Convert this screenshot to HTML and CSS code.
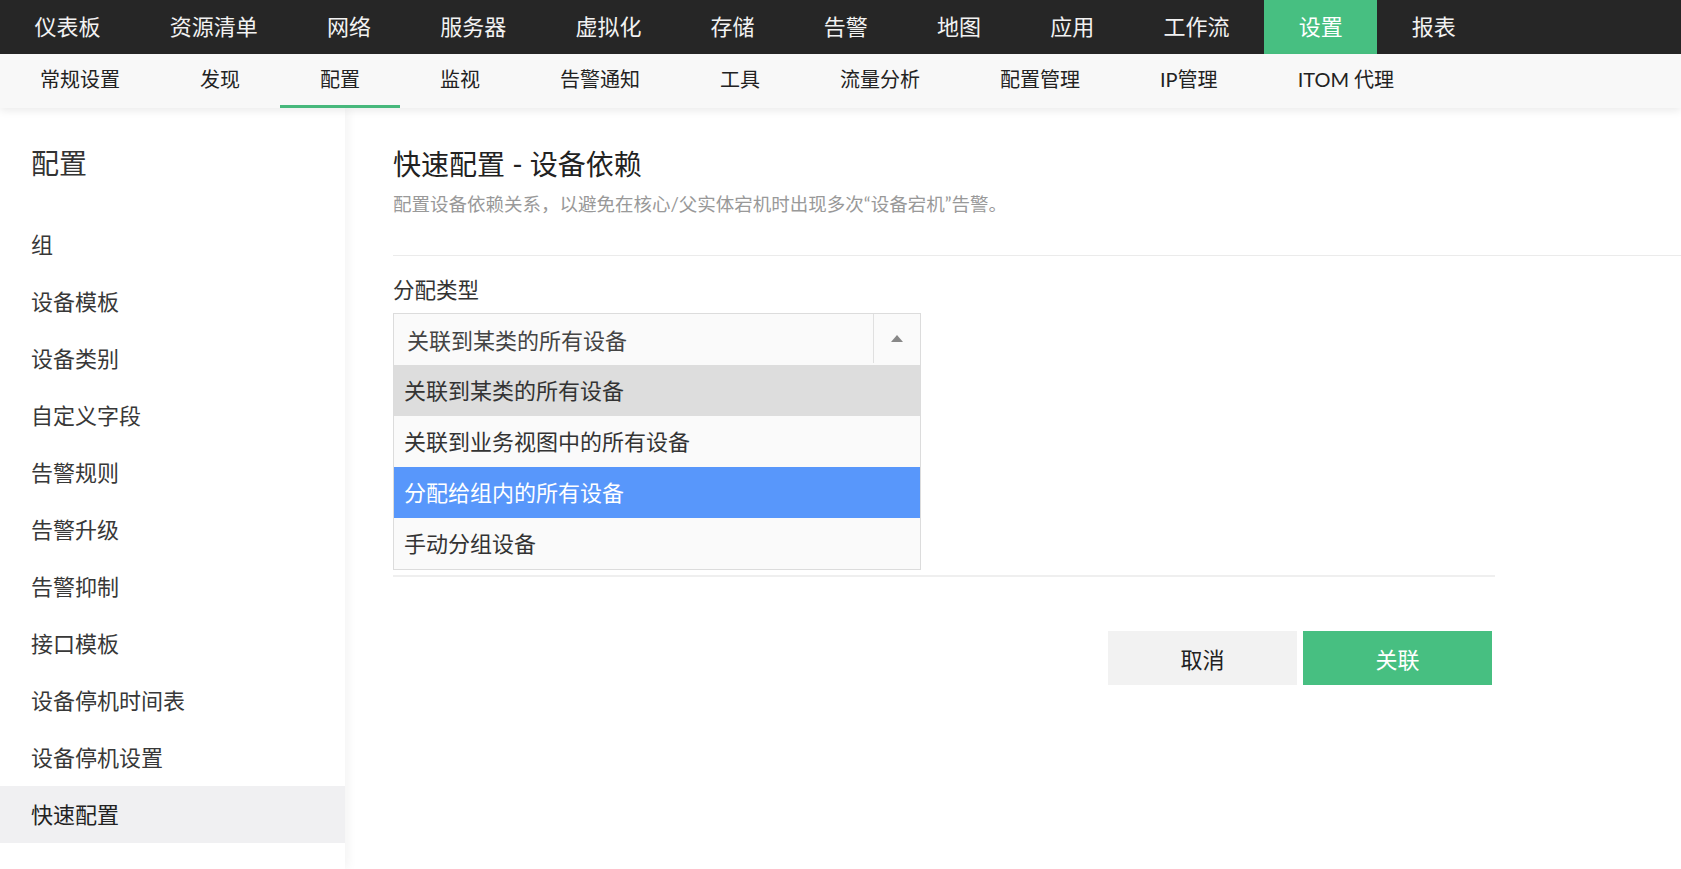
FILE: index.html
```html
<!DOCTYPE html>
<html lang="zh-CN">
<head>
    <meta charset="UTF-8">
    <meta name="viewport" content="width=device-width, initial-scale=1.0">
    <title>快速配置 - 设备依赖</title>
    <link rel="stylesheet" href="styles.css">
</head>
<body>

<div class="topnav">
    <a class="topnav-item">仪表板</a>
    <a class="topnav-item">资源清单</a>
    <a class="topnav-item">网络</a>
    <a class="topnav-item">服务器</a>
    <a class="topnav-item">虚拟化</a>
    <a class="topnav-item">存储</a>
    <a class="topnav-item">告警</a>
    <a class="topnav-item">地图</a>
    <a class="topnav-item">应用</a>
    <a class="topnav-item">工作流</a>
    <a class="topnav-item active">设置</a>
    <a class="topnav-item">报表</a>
</div>

<div class="subnav">
    <a class="subnav-item">常规设置</a>
    <a class="subnav-item">发现</a>
    <a class="subnav-item active">配置</a>
    <a class="subnav-item">监视</a>
    <a class="subnav-item">告警通知</a>
    <a class="subnav-item">工具</a>
    <a class="subnav-item">流量分析</a>
    <a class="subnav-item">配置管理</a>
    <a class="subnav-item">IP管理</a>
    <a class="subnav-item">ITOM 代理</a>
</div>

<div class="layout">
    <div class="sidebar">
        <h2 class="sidebar-title">配置</h2>
        <ul class="side-menu">
            <li>组</li>
            <li>设备模板</li>
            <li>设备类别</li>
            <li>自定义字段</li>
            <li>告警规则</li>
            <li>告警升级</li>
            <li>告警抑制</li>
            <li>接口模板</li>
            <li>设备停机时间表</li>
            <li>设备停机设置</li>
            <li class="active">快速配置</li>
        </ul>
    </div>

    <div class="main">
        <div class="page-head">
            <h1>快速配置 - 设备依赖</h1>
            <p class="desc">配置设备依赖关系，以避免在核心/父实体宕机时出现多次“设备宕机”告警。</p>
        </div>

        <div class="form">
            <div class="field">
                <label>分配类型</label>
                <div class="select open">
                    <div class="select-box">
                        <span class="select-value">关联到某类的所有设备</span>
                        <span class="select-arrow"><i class="caret"></i></span>
                    </div>
                    <ul class="select-list">
                        <li class="selected">关联到某类的所有设备</li>
                        <li>关联到业务视图中的所有设备</li>
                        <li class="highlighted">分配给组内的所有设备</li>
                        <li>手动分组设备</li>
                    </ul>
                </div>
            </div>
        </div>

        <div class="actions">
            <button class="btn btn-cancel">取消</button>
            <button class="btn btn-primary">关联</button>
        </div>
    </div>
</div>

</body>
</html>
```

FILE: styles.css
```css
body {
    font-family: 'Lato', 'Noto Sans CJK SC', sans-serif;
    background: #fff;
    color: #333;
    margin: 0;
    padding: 0;
}
ul {
    list-style: none;
    margin: 0;
    padding: 0;
}
.topnav {
    display: flex;
    height: 54px;
    background: #262626;
}
.topnav-item {
    padding: 0 34.6px;
    line-height: 54px;
    font-size: 22px;
    color: #f2f2f2;
    cursor: pointer;
}
.topnav-item.active {
    background: #47bf81;
    color: #fff;
}
.subnav {
    position: relative;
    z-index: 2;
    display: flex;
    height: 54px;
    background: #f8f8f8;
    box-shadow: 0 3px 8px rgba(0,0,0,0.08);
}
.subnav-item {
    padding: 0 40px;
    line-height: 51px;
    font-size: 20px;
    color: #222;
    border-bottom: 3px solid transparent;
    cursor: pointer;
}
.subnav-item.active {
    border-bottom-color: #47b87c;
}
.layout {
    display: flex;
    min-height: calc(100vh - 108px);
}
.sidebar {
    position: relative;
    z-index: 1;
    width: 345px;
    flex-shrink: 0;
    background: #fff;
    padding-top: 30px;
    box-shadow: 3px 0 10px rgba(0,0,0,0.05);
}
.sidebar-title {
    margin: 0 0 28px 0;
    padding-left: 31px;
    font-size: 28px;
    font-weight: normal;
    line-height: 50px;
    color: #333;
}
.side-menu li {
    padding-left: 31px;
    height: 57px;
    line-height: 57px;
    font-size: 22px;
    color: #383838;
    cursor: pointer;
}
.side-menu li.active {
    background: #f0f0f2;
    color: #222;
}
.main {
    flex: 1;
    padding: 36px 0 0 48px;
}
.page-head {
    padding-bottom: 38px;
    border-bottom: 1px solid #ebebeb;
}
.page-head h1 {
    margin: 0;
    font-size: 28px;
    font-weight: normal;
    line-height: 40px;
    color: #222;
}
.desc {
    margin: 7px 0 0 0;
    font-size: 18.5px;
    line-height: 26px;
    color: #999;
}
.form {
    width: 1102px;
    padding: 19px 0 210px 0;
    border-bottom: 2px solid #efefef;
}
.field label {
    display: block;
    font-size: 21.5px;
    line-height: 30px;
    color: #333;
    margin-bottom: 8px;
}
.select {
    position: relative;
    width: 528px;
}
.select-box {
    display: flex;
    height: 52px;
    border: 1px solid #dcdcdc;
    border-bottom: none;
    background: #fafafa;
    box-sizing: border-box;
}
.select-value {
    flex: 1;
    padding: 3px 0 0 13px;
    line-height: 48px;
    font-size: 22px;
    color: #444;
}
.select-arrow {
    width: 46px;
    height: 49px;
    display: flex;
    align-items: center;
    justify-content: center;
    border-left: 1px solid #e0e0e0;
}
.caret {
    width: 0;
    height: 0;
    border-left: 6px solid transparent;
    border-right: 6px solid transparent;
    border-bottom: 7px solid #888;
}
.select-list {
    position: absolute;
    top: 52px;
    left: 0;
    right: 0;
    background: #fafafa;
    border: 1px solid #dcdcdc;
    border-top: none;
    z-index: 5;
}
.select-list li {
    height: 51px;
    line-height: 51px;
    padding-left: 10px;
    font-size: 22px;
    color: #333;
}
.select-list li.selected {
    background: #ddd;
}
.select-list li.highlighted {
    background: #5897fb;
    color: #fff;
}
.actions {
    width: 1099px;
    display: flex;
    justify-content: flex-end;
    gap: 6px;
    margin-top: 54px;
}
.btn {
    width: 189px;
    height: 54px;
    border: none;
    font-family: inherit;
    font-size: 22px;
    cursor: pointer;
}
.btn-cancel {
    background: #f2f2f2;
    color: #222;
}
.btn-primary {
    background: #47bf81;
    color: #fff;
}
```
